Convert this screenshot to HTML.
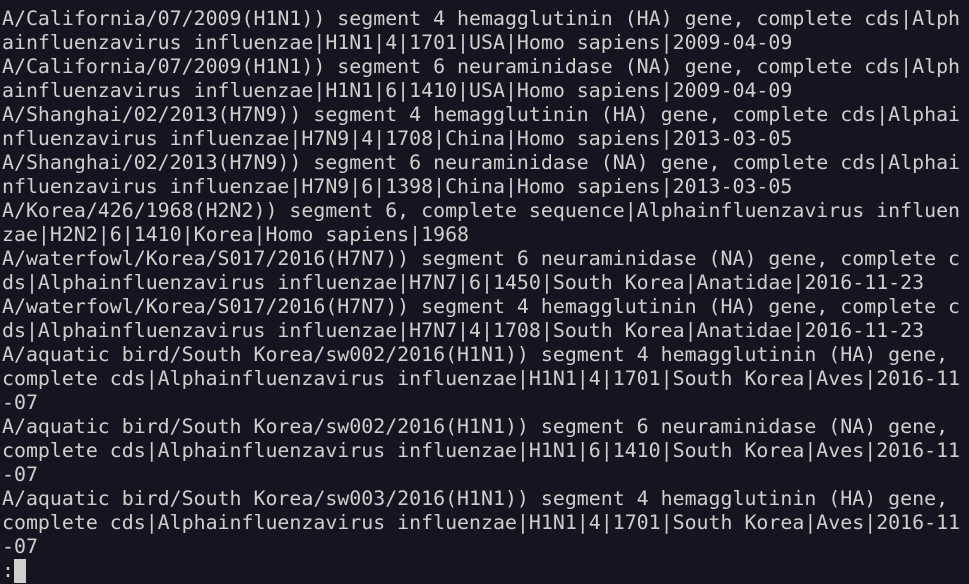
<!DOCTYPE html>
<html><head><meta charset="utf-8"><style>
html,body{margin:0;padding:0;background:#171421;width:969px;height:584px;overflow:hidden}
pre{margin:0;position:absolute;left:2px;top:7px;font-family:"DejaVu Sans Mono","Liberation Mono",monospace;font-size:19.9px;line-height:24px;color:#d0cfcc;white-space:pre}
.c{display:inline-block;width:12px;height:24px;background:#d0cfcc;vertical-align:top}
</style></head><body><pre>A/California/07/2009(H1N1)) segment 4 hemagglutinin (HA) gene, complete cds|Alph
ainfluenzavirus influenzae|H1N1|4|1701|USA|Homo sapiens|2009-04-09
A/California/07/2009(H1N1)) segment 6 neuraminidase (NA) gene, complete cds|Alph
ainfluenzavirus influenzae|H1N1|6|1410|USA|Homo sapiens|2009-04-09
A/Shanghai/02/2013(H7N9)) segment 4 hemagglutinin (HA) gene, complete cds|Alphai
nfluenzavirus influenzae|H7N9|4|1708|China|Homo sapiens|2013-03-05
A/Shanghai/02/2013(H7N9)) segment 6 neuraminidase (NA) gene, complete cds|Alphai
nfluenzavirus influenzae|H7N9|6|1398|China|Homo sapiens|2013-03-05
A/Korea/426/1968(H2N2)) segment 6, complete sequence|Alphainfluenzavirus influen
zae|H2N2|6|1410|Korea|Homo sapiens|1968
A/waterfowl/Korea/S017/2016(H7N7)) segment 6 neuraminidase (NA) gene, complete c
ds|Alphainfluenzavirus influenzae|H7N7|6|1450|South Korea|Anatidae|2016-11-23
A/waterfowl/Korea/S017/2016(H7N7)) segment 4 hemagglutinin (HA) gene, complete c
ds|Alphainfluenzavirus influenzae|H7N7|4|1708|South Korea|Anatidae|2016-11-23
A/aquatic bird/South Korea/sw002/2016(H1N1)) segment 4 hemagglutinin (HA) gene,
complete cds|Alphainfluenzavirus influenzae|H1N1|4|1701|South Korea|Aves|2016-11
-07
A/aquatic bird/South Korea/sw002/2016(H1N1)) segment 6 neuraminidase (NA) gene,
complete cds|Alphainfluenzavirus influenzae|H1N1|6|1410|South Korea|Aves|2016-11
-07
A/aquatic bird/South Korea/sw003/2016(H1N1)) segment 4 hemagglutinin (HA) gene,
complete cds|Alphainfluenzavirus influenzae|H1N1|4|1701|South Korea|Aves|2016-11
-07
:<span class="c"></span></pre></body></html>
